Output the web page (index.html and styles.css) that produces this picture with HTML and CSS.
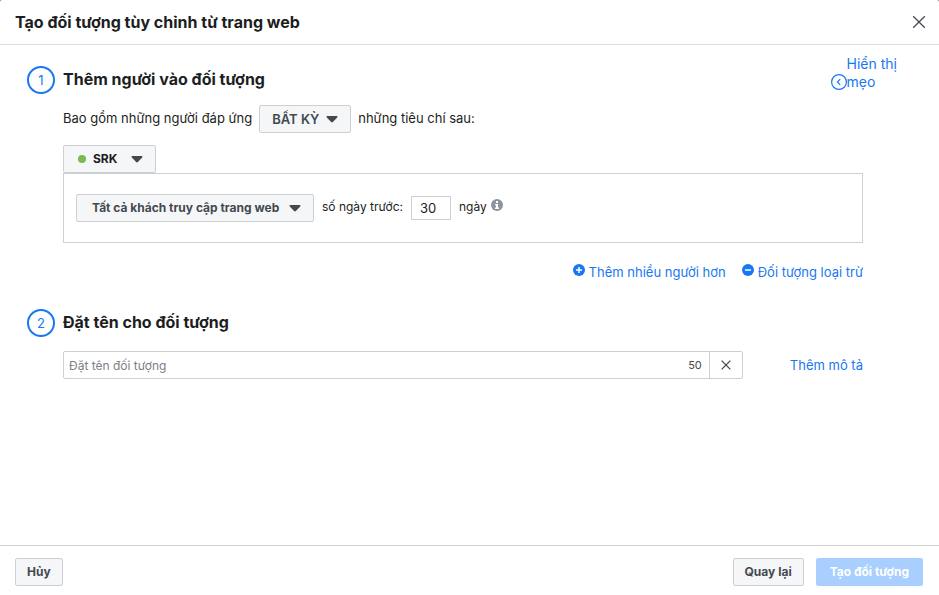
FILE: index.html
```
<!DOCTYPE html>
<html lang="vi">
<head>
  <meta charset="UTF-8">
  <meta name="viewport" content="width=device-width, initial-scale=1.0">
  <title>Tạo đối tượng tùy chỉnh từ trang web</title>
  <link rel="stylesheet" href="styles.css">
</head>
<body>
  <div class="dialog">
    <header class="dialog-header">
      <h1 class="dialog-title">Tạo đối tượng tùy chỉnh từ trang web</h1>
      <button class="icon-btn" type="button" aria-label="Đóng">
        <svg width="14" height="14" viewBox="0 0 14 14"><path d="M1.2 1.2l11.6 11.6M12.8 1.2L1.2 12.8"/></svg>
      </button>
    </header>

    <main class="dialog-body">
      <section class="step">
        <div class="step-header">
          <span class="step-number">1</span>
          <h2 class="step-title">Thêm người vào đối tượng</h2>
          <a class="tips" href="#">
            <svg width="16" height="16" viewBox="0 0 16 16"><circle cx="8" cy="8" r="7.4"/><path d="M9.2 5.2L6.4 8l2.8 2.8"/></svg>
            <span class="tips-text">Hiển thị<br>mẹo</span>
          </a>
        </div>

        <div class="step-content">
          <div class="row match-row">
            <label for="match">Bao gồm những người đáp ứng</label>
            <div class="select">
              <select id="match"><option>BẤT KỲ</option></select>
              <svg class="caret" width="12" height="7" viewBox="0 0 12 7"><path d="M1.200 0h9.600q.7 0 .7.700 0 .4-.3.700L6.900 6Q6 6.800 5.100 6L.8 1.400Q.5 1.100.5.700.5 0 1.200 0z"/></svg>
            </div>
            <span>những tiêu chí sau:</span>
          </div>

          <div class="select select-source">
            <span class="dot"></span>
            <select aria-label="Nguồn"><option>SRK</option></select>
            <svg class="caret" width="12" height="7" viewBox="0 0 12 7"><path d="M1.200 0h9.600q.7 0 .7.700 0 .4-.3.700L6.900 6Q6 6.800 5.100 6L.8 1.400Q.5 1.100.5.700.5 0 1.200 0z"/></svg>
          </div>
          <div class="rule-box row">
            <div class="select select-rule">
              <select aria-label="Sự kiện"><option>Tất cả khách truy cập trang web</option></select>
              <svg class="caret" width="12" height="7" viewBox="0 0 12 7"><path d="M1.200 0h9.600q.7 0 .7.700 0 .4-.3.700L6.900 6Q6 6.800 5.100 6L.8 1.400Q.5 1.100.5.700.5 0 1.200 0z"/></svg>
            </div>
            <label for="days">số ngày trước:</label>
            <input class="days" id="days" type="text" value="30">
            <span class="days-unit">ngày
              <svg class="info" width="12" height="12" viewBox="0 0 12 12"><circle cx="6" cy="6" r="6"/><path d="M5 2h2v2H5zM4.200 5H7v3.500h1V10H4V8.500h1v-2h-.8z"/></svg>
            </span>
          </div>

          <div class="rule-actions">
            <a class="link" href="#">
              <svg class="badge" width="12" height="12" viewBox="0 0 12 12"><circle cx="6" cy="6" r="6"/><path d="M3 6h6M6 3v6"/></svg>
              Thêm nhiều người hơn
            </a>
            <a class="link" href="#">
              <svg class="badge" width="12" height="12" viewBox="0 0 12 12"><circle cx="6" cy="6" r="6"/><path d="M3 6h6"/></svg>
              Đối tượng loại trừ
            </a>
          </div>
        </div>
      </section>

      <section class="step">
        <div class="step-header">
          <span class="step-number">2</span>
          <h2 class="step-title"><label for="name">Đặt tên cho đối tượng</label></h2>
        </div>
        <div class="step-content name-row">
          <div class="name-field">
            <input class="name-input" id="name" type="text" placeholder="Đặt tên đối tượng">
            <span class="counter">50</span>
            <button class="icon-btn clear-btn" type="button" aria-label="Xóa">
              <svg width="10" height="10" viewBox="0 0 10 10"><path d="M.6.6l8.800 8.800M9.400.6L.6 9.400"/></svg>
            </button>
          </div>
          <a class="link" href="#">Thêm mô tả</a>
        </div>
      </section>
    </main>

    <footer class="dialog-footer">
      <button class="btn" type="button">Hủy</button>
      <button class="btn btn-back" type="button">Quay lại</button>
      <button class="btn btn-primary" type="button" disabled>Tạo đối tượng</button>
    </footer>
  </div>
</body>
</html>
```
FILE: styles.css
```
* {
  box-sizing: border-box;
}

body {
  margin: 0;
  background-color: #777;
  color: #1c1e21;
  font-family: Inter, "Liberation Sans", sans-serif;
  font-size: 12px;
  line-height: 18px;
}

h1,
h2 {
  margin: 0;
  font-size: 16px;
  font-weight: 700;
  line-height: 20px;
}

button,
input,
select {
  margin: 0;
  font: inherit;
  color: inherit;
}

a {
  color: #1877f2;
  text-decoration: none;
}

svg {
  display: block;
  flex: none;
}

.dialog {
  display: flex;
  flex-direction: column;
  min-height: 100vh;
  background-color: #fff;
  border-radius: 2px 2px 0 0;
}

.dialog-header {
  display: flex;
  align-items: center;
  justify-content: space-between;
  height: 45px;
  padding: 0 13px 1px 15px;
  border-bottom: 1px solid #dadde1;
}

.icon-btn {
  display: flex;
  padding: 0;
  border: none;
  background: none;
  cursor: pointer;
}

.icon-btn path {
  fill: none;
  stroke: #444950;
  stroke-width: 1.3;
}

.dialog-body {
  flex: 1;
  padding: 10px 42px 24px 27px;
}

.step + .step {
  margin-top: 28px;
}

.step-header {
  display: flex;
  align-items: flex-end;
  gap: 8px;
}

.step-number {
  display: flex;
  align-items: center;
  justify-content: center;
  width: 28px;
  height: 28px;
  border: 2px solid #1877f2;
  border-radius: 50%;
  color: #1877f2;
  font-size: 13px;
}

.step-title {
  padding-bottom: 5px;
}

.step-content {
  margin: 0 34px 0 36px;
}

.tips {
  display: flex;
  align-items: flex-end;
  margin-left: auto;
  padding-bottom: 3px;
  font-size: 14px;
}

.tips-text {
  white-space: nowrap;
}

.tips svg {
  margin-bottom: 1px;
  fill: none;
  stroke: #1877f2;
  stroke-width: 1.2;
}

.row {
  display: flex;
  align-items: center;
  gap: 8px;
}

.match-row {
  gap: 7px;
  margin: 11px 0 12px;
  font-size: 13px;
}

.match-row > label,
.match-row > span {
  padding-bottom: 2px;
}

.select {
  position: relative;
  display: inline-flex;
  vertical-align: top;
  background-color: #f5f6f7;
  border: 1px solid #ccd0d5;
  border-radius: 2px;
  color: #444950;
  font-weight: 700;
}

.select select {
  height: 26px;
  padding: 0 30px 0 12px;
  border: none;
  background: none;
  appearance: none;
}

.match-row select {
  font-weight: 600;
}

.caret {
  position: absolute;
  top: 10px;
  right: 12px;
  fill: #444950;
  pointer-events: none;
}

.select-source {
  color: #1c1e21;
}

.select-source select {
  padding: 0 37px 0 29px;
}

.select-rule select {
  padding: 0 33px 0 15px;
}

.dot {
  position: absolute;
  top: 9px;
  left: 14px;
  width: 8px;
  height: 8px;
  border-radius: 50%;
  background-color: #7cb950;
}

.rule-box {
  height: 70px;
  padding: 0 12px;
  border: 1px solid #ccd0d5;
}

.rule-box > label,
.days-unit {
  padding-bottom: 2px;
}

.days {
  width: 40px;
  height: 24px;
  padding: 0 8px;
  border: 1px solid #ccd0d5;
  font-size: 13px;
}

.days-unit {
  display: flex;
  gap: 4px;
}

.info {
  margin-top: 1px;
  fill: #8d949e;
}

.info path {
  fill: #fff;
}

.rule-actions {
  display: flex;
  justify-content: flex-end;
  gap: 16px;
  margin-top: 20px;
}

.link {
  display: flex;
  gap: 4px;
  font-size: 13px;
}

.badge {
  margin-top: 1px;
  fill: #1877f2;
  stroke: #fff;
}

.badge circle {
  stroke: none;
}

.badge path {
  stroke-width: 1.5;
}

.name-row {
  display: flex;
  align-items: center;
  gap: 47px;
  margin-top: 14px;
}

.name-field {
  display: flex;
  flex: 1;
  align-items: center;
  height: 28px;
  border: 1px solid #ccd0d5;
  border-radius: 2px;
}

.name-input {
  flex: 1;
  min-width: 0;
  height: 26px;
  padding: 0 5px;
  border: none;
  background: none;
}

.name-input::placeholder {
  color: #7b8088;
  opacity: 1;
}

.counter {
  padding: 0 7px;
  font-size: 11px;
  color: #444950;
}

.clear-btn {
  align-items: center;
  justify-content: center;
  width: 33px;
  height: 26px;
  border-left: 1px solid #ccd0d5;
}

.dialog-footer {
  display: flex;
  align-items: center;
  gap: 12px;
  height: 50px;
  padding: 2px 16px 0 15px;
  border-top: 1px solid #ccd0d5;
}

.btn {
  height: 28px;
  padding: 0 11px;
  border: 1px solid #ccd0d5;
  border-radius: 2px;
  background-color: #f5f6f7;
  color: #444950;
  font-weight: 700;
}

.btn-back {
  margin-left: auto;
}

.btn-primary {
  padding: 0 13px;
  border-color: #a8cfff;
  background-color: #a8cfff;
  color: #fff;
}
```
